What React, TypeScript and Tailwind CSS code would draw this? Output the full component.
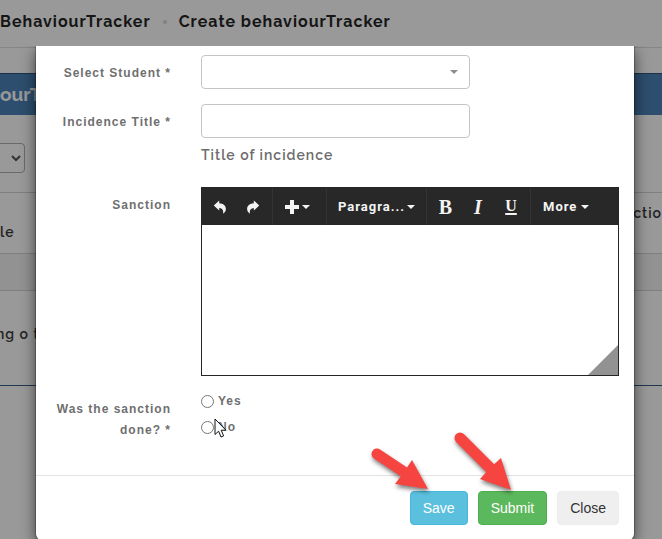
const labelCls =
  "text-right text-[12px] leading-[21px] font-bold tracking-[1px] text-[#6f6f6f]";
const fieldCls =
  "h-[34px] w-full appearance-none rounded border border-[#c4c4c4] bg-white px-3 text-[14px] text-[#555]";
const toolCls = "flex h-full items-center justify-center text-[#f4f4f4]";

function Caret({ className = "" }: { className?: string }) {
  return (
    <svg viewBox="0 0 8 4" className={`h-1 w-2 ${className}`} fill="currentColor" aria-hidden="true">
      <path d="M0 0h8L4 4z" />
    </svg>
  );
}

function UndoArrow({ className = "" }: { className?: string }) {
  return (
    <svg viewBox="0 0 14 16" className={`h-4 w-[14px] ${className}`} fill="currentColor" aria-hidden="true">
      <path d="M0.8 6.6L6.2 1.4V4.2C10.2 4.4 13 6.8 12.9 10C12.8 12 11.8 13.6 10 14.8C10.8 11.6 9.6 9.2 6.2 8.9V11.6Z" />
    </svg>
  );
}

// Pointer arrow used to call out a button
function Callout({ className, shaft, head }: { className: string; shaft: string; head: string }) {
  return (
    <svg
      viewBox="0 0 60 64"
      className={`pointer-events-none absolute h-16 w-[60px] overflow-visible drop-shadow-[1px_3px_2px_rgba(0,0,0,0.5)] ${className}`}
      aria-hidden="true"
    >
      <path d={shaft} stroke="#f64540" strokeWidth="11" strokeLinecap="round" />
      <path d={head} fill="#f64540" />
    </svg>
  );
}

function BackgroundPage() {
  return (
    <div className="min-h-screen bg-white font-['Raleway','Lato',sans-serif] text-[#3a3a3a]">
      <header className="flex h-12 items-center gap-3 border-b border-[#e0e0e0] pb-1 text-[16px] font-bold tracking-[1px] whitespace-nowrap text-[#262626]">
        <a href="#tracker">BehaviourTracker</a>
        <span className="size-1 rounded-full bg-[#d8d8d8]" />
        <h1>Create behaviourTracker</h1>
      </header>

      <div className="mt-[25px] flex h-[42px] items-center overflow-hidden border-t border-[#2d567c] bg-[#4b83b8]">
        <span className="text-[19px] font-bold text-white">ourTracker</span>
      </div>

      <div className="flex h-[77px] items-start pt-7">
        <select aria-label="Rows" className="-ml-6 h-[30px] w-[49px] rounded border border-[#b0b0b0] bg-white text-[13px] text-[#555]">
          <option></option>
        </select>
        <span className="ml-[10px] text-[15px] leading-[30px]">records</span>
      </div>

      <div className="flex h-[61px] justify-between border-t border-[#d4d4d4] text-[14px] font-semibold tracking-[1px]">
        <span className="self-end pb-[10px]">le</span>
        <span className="pt-[10px]">ctio</span>
      </div>
      <div className="h-[38px] border-y border-[#d4d4d4] bg-[#f4f4f4]" />
      <div className="flex h-[95px] items-center border-b border-[#355f86] pb-2 text-[14px] font-semibold tracking-[1px] whitespace-nowrap">
        <span className="-ml-1">ng o t</span>
      </div>
    </div>
  );
}

function Editor() {
  return (
    <div className="relative border border-[#252525]">
      <div className="flex h-[37px] items-center bg-[#282828] pl-[2px] font-['Roboto',sans-serif] text-[13px] font-bold tracking-[1px]">
        <button type="button" aria-label="Undo" className={`${toolCls} w-8`}>
          <UndoArrow />
        </button>
        <button type="button" aria-label="Redo" className={`${toolCls} w-9 pr-[2px]`}>
          <UndoArrow className="-scale-x-100" />
        </button>
        <button type="button" aria-label="Insert" className={`${toolCls} w-[54px] gap-[3px] border-l border-[#333] pr-1`}>
          <svg viewBox="0 0 14 14" className="size-[14px]" fill="currentColor" aria-hidden="true">
            <path d="M5 0h4v5h5v4H9v5H5V9H0V5h5z" />
          </svg>
          <Caret />
        </button>
        <button type="button" className={`${toolCls} w-[100px] gap-[2px] border-l border-[#333]`}>
          Paragra...
          <Caret />
        </button>
        <button type="button" aria-label="Bold" className={`${toolCls} w-[38px] border-l border-[#333] font-['Liberation_Serif',serif] text-[20px] font-bold tracking-normal`}>
          B
        </button>
        <button type="button" aria-label="Italic" className={`${toolCls} w-7 font-['Liberation_Serif',serif] text-[20px] font-bold tracking-normal italic`}>
          I
        </button>
        <button type="button" aria-label="Underline" className={`${toolCls} w-[38px] pb-[2px] font-['Liberation_Serif',serif] text-[16px] font-bold tracking-normal underline decoration-2 underline-offset-2`}>
          U
        </button>
        <button type="button" className={`${toolCls} gap-1 border-l border-[#333] pl-3`}>
          More
          <Caret />
        </button>
      </div>
      <textarea id="sanction" className="block h-[150px] w-full resize-none bg-white p-3 text-[14px] outline-none" />
      <svg viewBox="0 0 30 30" className="absolute right-0 bottom-0 size-[30px]" aria-hidden="true">
        <path d="M30 0V30H0z" fill="#929292" />
      </svg>
    </div>
  );
}

function TrackerModal() {
  return (
    <form
      role="dialog"
      aria-label="Create behaviourTracker"
      className="mr-7 ml-9 rounded-b-md bg-white shadow-[0_0_1px_1px_rgba(0,0,0,0.25),0_5px_15px_rgba(0,0,0,0.6)]"
    >
      <div className="grid grid-cols-[120px_minmax(0,1fr)] gap-x-[30px] px-[15px] pt-[9px] pb-[34px]">
        <label htmlFor="student" className={`${labelCls} pt-2`}>
          Select Student *
        </label>
        <div className="relative mb-[15px] max-w-[269px]">
          <select id="student" className={fieldCls}>
            <option></option>
          </select>
          <Caret className="absolute top-[15px] right-3 text-[#8d8d8d]" />
        </div>

        <label htmlFor="incidence" className={`${labelCls} pt-2`}>
          Incidence Title *
        </label>
        <div className="mb-[21px]">
          <input id="incidence" type="text" className={`${fieldCls} max-w-[269px]`} />
          <p className="mt-[7px] font-['Raleway','Lato',sans-serif] text-[14px] leading-[21px] font-semibold tracking-[1px] text-[#6c6c6c]">
            Title of incidence
          </p>
        </div>

        <label htmlFor="sanction" className={`${labelCls} pt-2`}>
          Sanction
        </label>
        <Editor />

        <span id="done-label" className={`${labelCls} pt-[23px]`}>
          Was the sanction done? *
        </span>
        <div role="radiogroup" aria-labelledby="done-label" className="relative flex flex-col gap-[5px] pt-[15px]">
          {["Yes", "No"].map((answer) => (
            <label key={answer} className={`${labelCls} flex items-center gap-1`}>
              <input type="radio" name="done" value={answer} className="size-[13px]" />
              {answer}
            </label>
          ))}
          <svg viewBox="0 0 13 20" className="absolute top-[42px] left-[13px] h-5 w-[13px]" aria-hidden="true">
            <path d="M1 1V16.5L4.6 13.2L7 19L9.6 17.9L7.2 12.2H12Z" fill="#fff" stroke="#111" />
          </svg>
        </div>
      </div>

      <div className="relative flex justify-end gap-[10px] border-t border-[#e2e2e2] px-[15px] py-[15px] text-[14px]">
        <button type="button" className="h-[34px] rounded border border-[#46b8da] bg-[#5bc0de] px-3 text-white">
          Save
        </button>
        <button type="submit" className="h-[34px] rounded border border-[#4cae4c] bg-[#5cb85c] px-3 text-white">
          Submit
        </button>
        <button type="button" className="h-[34px] rounded border border-[#eee] bg-[#efefef] px-3 text-[#333]">
          Close
        </button>
        <Callout className="-top-[26px] right-[204px]" shaft="M7 4L34 22" head="M42 10L58 39L25 34L34 22Z" />
        <Callout className="-top-[42px] right-[120px]" shaft="M6 4L36 34" head="M47 24L57 56L26 45L36 34Z" />
      </div>
    </form>
  );
}

export default function App() {
  return (
    <div className="relative min-h-screen overflow-hidden font-['Liberation_Sans',Arial,sans-serif]">
      <BackgroundPage />
      <div className="absolute inset-0 bg-black/40" />
      {/* Scrolled modal, clipped under the page header */}
      <div className="absolute inset-x-0 top-[46px] bottom-0 overflow-hidden">
        <TrackerModal />
      </div>
    </div>
  );
}
